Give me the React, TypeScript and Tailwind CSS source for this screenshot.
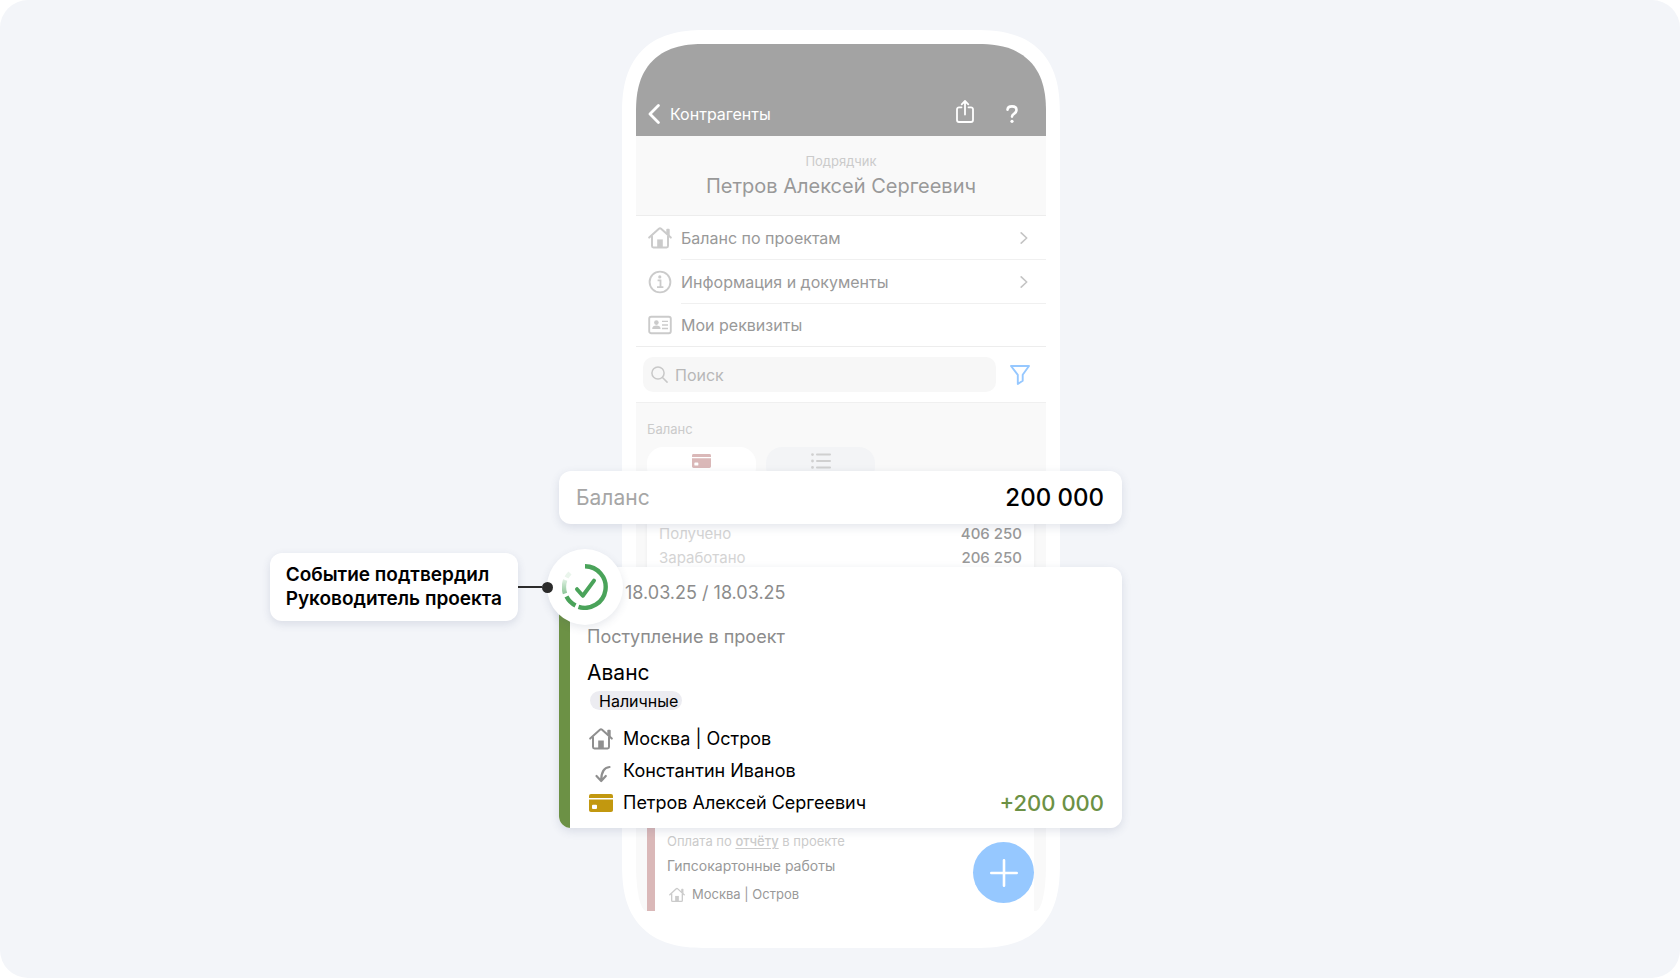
import React from 'react';

interface IconProps {
  className?: string;
}

const HouseIcon: React.FC<IconProps> = ({ className }) => (
  <svg viewBox="0 0 24 24" className={className} fill="none" stroke="currentColor" strokeLinejoin="round" strokeLinecap="round" aria-hidden="true">
    <path d="M1.2 11.6 10.9 2.8a1.6 1.6 0 0 1 2.2 0l9.7 8.8" strokeWidth="2" />
    <path d="M19.2 7V3.6h1.6v5.2" strokeWidth="1.8" />
    <path d="M4 10.5v9.6a1.4 1.4 0 0 0 1.4 1.4h13.2a1.4 1.4 0 0 0 1.4-1.4v-9.6" strokeWidth="2" />
    <path d="M9.2 13.4h5.6v8H9.2z" fill="currentColor" stroke="none" />
  </svg>
);

const InfoIcon: React.FC<IconProps> = ({ className }) => (
  <svg viewBox="0 0 24 24" className={className} fill="none" stroke="currentColor" aria-hidden="true">
    <circle cx="12" cy="12" r="10.4" strokeWidth="1.9" />
    <circle cx="11.8" cy="6.9" r="1.6" fill="currentColor" stroke="none" />
    <path d="M9.6 10.4h2.9v6.6M9 17.1h6.4" strokeWidth="1.8" />
  </svg>
);

const IdCardIcon: React.FC<IconProps> = ({ className }) => (
  <svg viewBox="0 0 24 24" className={className} fill="none" stroke="currentColor" aria-hidden="true">
    <rect x="1.2" y="3.8" width="21.6" height="16.4" rx="2" strokeWidth="1.9" />
    <circle cx="8.4" cy="9.6" r="2.3" fill="currentColor" stroke="none" />
    <path d="M4.2 16c0-2.4 1.8-3.4 4.2-3.4s4.2 1 4.2 3.4z" fill="currentColor" stroke="none" />
    <path d="M14 8.4h6M14 12h6M14 15.5h6" strokeWidth="1.3" />
  </svg>
);

const CardIcon: React.FC<IconProps> = ({ className }) => (
  <svg viewBox="0 0 24 20" preserveAspectRatio="none" className={className} fill="currentColor" aria-hidden="true">
    <path d="M2 0h20a2 2 0 0 1 2 2v2.4H0V2a2 2 0 0 1 2-2z" />
    <path fillRule="evenodd" d="M0 6.2h24V18a2 2 0 0 1-2 2H2a2 2 0 0 1-2-2zM4 12a1 1 0 0 0-1 1v2.6a1 1 0 0 0 1 1h3a1 1 0 0 0 1-1V13a1 1 0 0 0-1-1z" />
  </svg>
);

const ListIcon: React.FC<IconProps> = ({ className }) => (
  <svg viewBox="0 0 20 16" className={className} fill="none" stroke="currentColor" strokeLinecap="round" aria-hidden="true">
    <path d="M1.5 1.6h.01M1.5 8h.01M1.5 14.4h.01" strokeWidth="2.8" />
    <path d="M6 1.6h13M6 8h13M6 14.4h13" strokeWidth="2" />
  </svg>
);

const ChevronIcon: React.FC<IconProps> = ({ className }) => (
  <svg viewBox="0 0 8 12" className={className} fill="none" stroke="currentColor" strokeWidth="1.6" strokeLinecap="round" strokeLinejoin="round" aria-hidden="true">
    <path d="M1.2.9 6.7 6l-5.5 5.1" />
  </svg>
);

const menu = [
  { label: 'Баланс по проектам', icon: HouseIcon, chevron: true },
  { label: 'Информация и документы', icon: InfoIcon, chevron: true },
  { label: 'Мои реквизиты', icon: IdCardIcon, chevron: false },
];

const totals = [
  { label: 'Получено', value: '406 250' },
  { label: 'Заработано', value: '206 250' },
];

const PhoneHeader: React.FC = () => (
  <header className="flex h-[92px] items-end rounded-t-[68px] [corner-shape:superellipse(1.3)] bg-[#a3a3a3] pb-2 pl-3 pr-7 text-white">
    <button className="flex h-7 items-center text-[16px]">
      <svg viewBox="0 0 12 20" className="mr-[10px] h-5 w-3" fill="none" stroke="currentColor" strokeWidth="2.8" strokeLinecap="round" strokeLinejoin="round" aria-hidden="true">
        <path d="M10.4 1.6 2 10l8.4 8.4" />
      </svg>
      Контрагенты
    </button>
    <button className="ml-auto flex h-7 items-start" aria-label="Поделиться">
      <svg viewBox="0 0 18 23" className="h-[23px] w-[18px]" fill="none" stroke="currentColor" strokeWidth="1.8" strokeLinecap="round" strokeLinejoin="round" aria-hidden="true">
        <path d="M5.5 7.3H3a2 2 0 0 0-2 2V20a2 2 0 0 0 2 2h12a2 2 0 0 0 2-2V9.3a2 2 0 0 0-2-2h-2.5" />
        <path d="M9 14.5V1.2M5.7 4.3 9 1l3.3 3.3" />
      </svg>
    </button>
    <button className="ml-8 flex h-7 items-center" aria-label="Помощь">
      <svg viewBox="0 0 12 18" className="h-[18px] w-3" fill="none" stroke="currentColor" strokeWidth="2.6" strokeLinecap="round" strokeLinejoin="round" aria-hidden="true">
        <path d="M1.5 4.7C1.7 2.6 3.5 1.4 6 1.4c2.7 0 4.5 1.4 4.5 3.6 0 1.8-1 2.7-2.3 3.6C6.7 9.5 6 10.2 6 11.6" />
        <path d="M6 16.3h.01" strokeWidth="3.2" />
      </svg>
    </button>
  </header>
);

const StatusBadge: React.FC = () => (
  <div className="absolute -left-3 -top-[18px] flex size-[76px] items-center justify-center rounded-full bg-white shadow-[0_3px_8px_rgba(60,70,110,0.12)]">
    <svg viewBox="0 0 46 46" className="size-[46px]" fill="none" stroke="#4aa35a" strokeWidth="4.4" role="img" aria-label="Подтверждено">
      <defs>
        <linearGradient id="fade" x1="0" y1="1" x2="0" y2="0">
          <stop offset="0" stopColor="#8fc79a" />
          <stop offset="1" stopColor="#dcefdf" />
        </linearGradient>
      </defs>
      <path d="M23 2.2A20.800 20.800 0 1 1 16.500 42.800" />
      <path d="M13.5 41.5A20.800 20.800 0 0 1 4.500 32.500" />
      <path d="M3 29.5A20.800 20.800 0 0 1 3.200 16" stroke="url(#fade)" />
      <path d="M4.500 13.500A20.800 20.800 0 0 1 8 9" stroke="#eaf5ec" />
      <path d="M15 25.200 20.800 31.800 32 16.600" strokeLinecap="round" strokeLinejoin="round" strokeWidth="4" />
    </svg>
    <div className="absolute right-[70px] top-1/2 flex w-max -translate-y-1/2 items-center">
      <div className="rounded-xl bg-white px-4 py-[10px] text-[19px] font-semibold leading-6 text-black shadow-[0_3px_8px_rgba(60,70,110,0.14)]">
        Событие подтвердил
        <br />
        Руководитель проекта
      </div>
      <div className="h-[2px] w-6 bg-[#2b2b2b]" />
      <div className="size-[11px] rounded-full bg-[#2b2b2b]" />
    </div>
  </div>
);

const EventCard: React.FC = () => (
  <article className="relative z-10 -mx-[77px] -mt-[3px] rounded-xl shadow-[0_3px_10px_rgba(60,70,110,0.14)]">
    <div className="overflow-hidden rounded-xl bg-white">
      <div className="border-l-[11px] border-[#6c9145] pb-[9px] pl-[17px] pr-[18px] pt-3 text-[18px] leading-7 text-black">
        <p className="pl-[38px] text-[#8c8c8c]">18.03.25 / 18.03.25</p>
        <p className="mt-4 text-[#8c8c8c]">Поступление в проект</p>
        <h2 className="mt-2 text-[21px]">Аванс</h2>
        <span className="ml-[3px] mt-1 flex h-[19px] w-max items-center rounded-full bg-[#ececf1] pl-[9px] pr-1 text-[16px]">
          Наличные
        </span>
        <ul className="mt-[13px]">
          <li className="flex h-8 items-center">
            <HouseIcon className="ml-[2px] mr-[10px] size-6 text-[#8f8f8f]" />
            Москва | Остров
          </li>
          <li className="flex h-8 items-center">
            <svg viewBox="0 0 24 24" className="ml-[2px] mr-[10px] size-6 text-[#8f8f8f]" fill="none" stroke="currentColor" strokeWidth="2.2" strokeLinecap="round" strokeLinejoin="round" aria-hidden="true">
              <path d="M20.5 8c-5 .5-8.300 4.500-8.300 13.500M7.500 17l4.700 5 4.600-5" />
            </svg>
            Константин Иванов
          </li>
          <li className="flex h-8 items-center">
            <CardIcon className="ml-[2px] mr-[10px] h-[18px] w-6 text-[#c2980f]" />
            Петров Алексей Сергеевич
            <span className="ml-auto text-[22px] font-medium text-[#6c9145]">+200 000</span>
          </li>
        </ul>
      </div>
    </div>
    <StatusBadge />
  </article>
);

const App: React.FC = () => {
  return (
    <main className="flex min-h-screen items-start justify-center rounded-[28px] bg-[#f3f5f9] pb-[30px] pl-[2px] pt-[30px] font-['Inter','Liberation_Sans',sans-serif] text-[#999]">
      <div className="w-[438px] rounded-[85px] [corner-shape:superellipse(1.35)] bg-white px-[14px] pb-[37px] pt-[14px]">
        <PhoneHeader />

        <div className="flex h-20 flex-col items-center border-b border-[#ededed] bg-[#f9f9f9] pt-4 text-center">
          <p className="text-[13px] leading-[18px] text-[#cbcbcb]">Подрядчик</p>
          <h1 className="text-[20px] leading-8">Петров Алексей Сергеевич</h1>
        </div>

        <nav className="border-b border-[#ededed]">
          {menu.map(({ label, icon: Icon, chevron }, i) => (
            <a key={label} href="#" className="flex items-center pl-3 text-[16px]">
              <Icon className="mr-[9px] size-6 shrink-0 text-[#cbcbcb]" />
              <span className={`flex flex-1 items-center justify-between pr-[18px] ${i < 2 ? 'h-11 border-b border-[#f0f0f0]' : 'h-[42px]'}`}>
                {label}
                {chevron && <ChevronIcon className="h-3 w-2 text-[#c4c4c4]" />}
              </span>
            </a>
          ))}
        </nav>

        <div className="flex h-14 items-center border-b border-[#f0f0f0] pl-[7px] pr-4">
          <label className="flex h-[35px] flex-1 items-center rounded-[10px] bg-[#f7f7f7] pl-2">
            <svg viewBox="0 0 17 17" className="mr-[7px] size-[17px] shrink-0 text-[#c8c8c8]" fill="none" stroke="currentColor" strokeWidth="1.5" strokeLinecap="round" aria-hidden="true">
              <circle cx="7" cy="7" r="6.1" />
              <path d="m11.5 11.5 4.6 4.6" />
            </svg>
            <input type="search" aria-label="Поиск" placeholder="Поиск" className="w-full bg-transparent text-[16px] outline-none placeholder:text-[#b8b8b8]" />
          </label>
          <button className="ml-[14px]" aria-label="Фильтр">
            <svg viewBox="0 0 20 20" className="size-5" fill="none" stroke="#96c8ff" strokeWidth="1.9" strokeLinejoin="round" aria-hidden="true">
              <path d="M1 1h18l-6.3 8.800v6L7.800 19v-9.200z" />
            </svg>
          </button>
        </div>

        <section className="rounded-b-[10px_45px] bg-[#f9f9f9] pl-[11px] pr-3">
          <p className="pb-[9px] pt-[17px] text-[13px] leading-[18px] text-[#cbcbcb]">Баланс</p>
          <div className="flex gap-[10px]">
            <button className="flex h-9 w-[109px] items-center justify-center rounded-2xl bg-white pb-2 text-[#dab8b8]" aria-label="Карта">
              <CardIcon className="h-[14px] w-[19px]" />
            </button>
            <button className="flex h-9 w-[109px] items-center justify-center rounded-2xl bg-[#f3f4f6] pb-2 text-[#d0d0d0]" aria-label="Список">
              <ListIcon className="h-4 w-5" />
            </button>
          </div>

          <div className="-mx-[11px]">
            <div className="relative z-10 -mx-[77px] -mt-3 flex h-[53px] items-center justify-between rounded-xl bg-white pl-[17px] pr-[18px] shadow-[0_3px_10px_rgba(60,70,110,0.14)]">
              <span className="text-[21px] text-[#a6a6a6]">Баланс</span>
              <span className="text-[24px] font-medium text-black">200 000</span>
            </div>
          </div>

          <dl className="-mt-[2px] bg-white px-3 text-[15px] leading-6 shadow-[0_0_4px_rgba(0,0,0,0.05)]">
            {totals.map(({ label, value }) => (
              <div key={label} className="flex justify-between">
                <dt className="text-[#d4d4d4]">{label}</dt>
                <dd className="font-medium text-[#999]">{value}</dd>
              </div>
            ))}
          </dl>

          <div className="-mx-[11px]">
            <EventCard />
          </div>

          <article className="relative border-l-8 border-[#dab8b8] bg-white pl-3">
            <p className="text-[13px] leading-[26px] text-[#cbcbcb]">
              Оплата по <a href="#" className="font-medium underline underline-offset-2">отчёту</a> в проекте
            </p>
            <h3 className="text-[14px] leading-6">Гипсокартонные работы</h3>
            <p className="flex h-[33px] items-center text-[13px]">
              <HouseIcon className="ml-[2px] mr-[7px] size-4 text-[#cbcbcb]" />
              Москва | Остров
            </p>
            <button className="absolute right-0 top-[14px] flex size-[61px] items-center justify-center rounded-full bg-[#96c8ff]" aria-label="Добавить">
              <svg viewBox="0 0 28 28" className="size-7" stroke="white" strokeWidth="2.6" strokeLinecap="round" aria-hidden="true">
                <path d="M14 1.3v25.4M1.3 14h25.4" />
              </svg>
            </button>
          </article>
        </section>
      </div>
    </main>
  );
};

export default App;
